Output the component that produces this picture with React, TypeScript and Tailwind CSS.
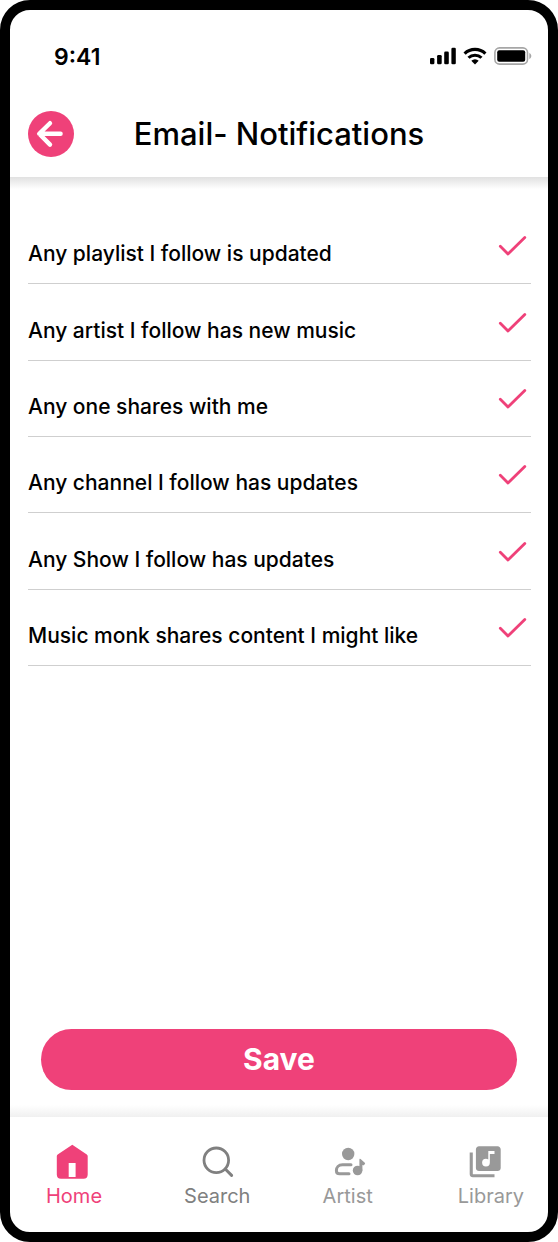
import { useState } from "react";

const options = [
  "Any playlist I follow is updated",
  "Any artist I follow has new music",
  "Any one shares with me",
  "Any channel I follow has updates",
  "Any Show I follow has updates",
  "Music monk shares content I might like",
];

function StatusBar() {
  return (
    <div className="flex items-start justify-between pl-11 pr-4 pt-8">
      <span className="text-[23px] leading-[30px] font-semibold">9:41</span>
      <div className="mt-[5px] flex items-center gap-[7px]">
        <svg width="26" height="18" viewBox="0 0 26 18" aria-hidden="true">
          <rect x="0" y="11" width="4.4" height="6.2" rx="1.3" />
          <rect x="7.1" y="8" width="4.6" height="9.2" rx="1.3" />
          <rect x="14.2" y="4.6" width="4.6" height="12.6" rx="1.3" />
          <rect x="21.4" y="0.8" width="4.4" height="16.4" rx="1.3" />
        </svg>
        <svg width="24" height="18" viewBox="0 0 24 18" aria-hidden="true">
          <path d="M1.6 6.6a15 15 0 0 1 20.8 0" fill="none" stroke="#000" strokeWidth="3.2" />
          <path d="M5.5 10.8a9.3 9.3 0 0 1 13 0" fill="none" stroke="#000" strokeWidth="3" />
          <path d="M8.3 13.7a5.3 5.3 0 0 1 7.4 0L12 17.4z" />
        </svg>
        <svg width="38" height="18" viewBox="0 0 38 18" aria-hidden="true">
          <rect x="0.9" y="0.9" width="32.6" height="16.2" rx="4.6" fill="none" stroke="#a6a6a6" strokeWidth="1.6" />
          <rect x="3.2" y="3.2" width="28" height="11.6" rx="2" />
          <path d="M35.3 6v6c1.2-.5 2-1.6 2-3s-.8-2.5-2-3z" fill="#a6a6a6" />
        </svg>
      </div>
    </div>
  );
}

function NavItem(props: any) {
  return (
    <a href="#" className={`flex flex-col items-center ${props.color}`}>
      <svg width="48" height="36" viewBox="-4 0 48 36" fill="currentColor" aria-hidden="true">
        {props.children}
      </svg>
      <span className="text-[20px] leading-8">{props.label}</span>
    </a>
  );
}

export default function App() {
  const [checked, setChecked] = useState(options.map(() => true));

  const toggle = (index: number) => {
    setChecked(checked.map((value, i) => (i === index ? !value : value)));
  };

  return (
    <div className="flex min-h-screen flex-col overflow-hidden rounded-[30px] border-[10px] border-black bg-white font-['Inter',sans-serif] text-black">
      <header className="pb-5">
        <StatusBar />
        <div className="mt-[39px] grid grid-cols-[46px_1fr_46px] items-center px-[18px]">
          <button type="button" aria-label="Back" className="size-[46px] cursor-pointer rounded-full bg-[#ef4179]">
            <svg width="46" height="46" viewBox="0 0 46 46" fill="none" stroke="#fff" strokeWidth="4.4" strokeLinecap="round" strokeLinejoin="round">
              <path d="M22 12.2L11.2 22.8L22 33.6M11.5 22.8H32.6" />
            </svg>
          </button>
          <h1 className="text-center text-[31px] leading-10 font-medium">Email- Notifications</h1>
        </div>
      </header>
      <div className="h-3 bg-linear-to-b from-[#e1e1e1] to-white" />

      <main className="flex flex-1 flex-col">
        <ul className="mt-[19px] ml-[18px] mr-[17px] grid min-h-[458px] auto-rows-fr">
          {options.map((option, i) => (
            <li key={option} className="border-b border-[#cfcfcf]">
              <label className="flex h-full cursor-pointer items-end justify-between pb-[17px] text-[21px] leading-6 font-medium">
                {option}
                <input
                  type="checkbox"
                  checked={checked[i]}
                  onChange={() => toggle(i)}
                  className="peer sr-only"
                />
                <svg
                  width="30"
                  height="24"
                  viewBox="0 0 30 24"
                  fill="none"
                  stroke="#ef4179"
                  strokeWidth="2.8"
                  strokeLinecap="round"
                  strokeLinejoin="round"
                  className="invisible mr-1 mb-[9px] peer-checked:visible"
                >
                  <path d="M3.3 13.2L11 21L27.8 4.4" />
                </svg>
              </label>
            </li>
          ))}
        </ul>
        <button
          type="button"
          className="mt-auto mb-[15px] ml-[31px] mr-[31px] h-[61px] cursor-pointer rounded-full bg-[#ef4179] text-[30px] font-bold text-white"
        >
          Save
        </button>
      </main>

      <div className="h-3 bg-linear-to-t from-[#f0f0f0] to-white" />
      <nav className="flex justify-between pt-[27px] pr-6 pb-5 pl-9">
        <div className="flex gap-[82px]">
          <NavItem label="Home" color="text-[#ef4179]">
            <path fillRule="evenodd" d="M18.3.8L32.8 10.6q.9.6.9 1.6V30.6q0 4.2-4.2 4.2H7q-4.2 0-4.2-4.2V12.2q0-1 .9-1.6zM14.7 19v14h6.9V19z" />
          </NavItem>
          <NavItem label="Search" color="text-[#808080]">
            <circle cx="19.3" cy="16.3" r="12.3" fill="none" stroke="currentColor" strokeWidth="2.8" />
            <path d="M28.5 25.2L34.6 31.4" stroke="currentColor" strokeWidth="3" strokeLinecap="round" />
          </NavItem>
        </div>
        <div className="flex gap-[85px]">
          <NavItem label="Artist" color="text-[#999999]">
            <circle cx="20.2" cy="10" r="6.2" />
            <path d="M23 20.7H14.5C10.5 20.7 8.4 23.4 8.4 26.4C8.4 28.8 9.4 29.8 11.6 29.8H21" fill="none" stroke="currentColor" strokeWidth="3" strokeLinecap="round" />
            <circle cx="29.6" cy="26.5" r="4.8" />
            <path d="M31.4 26.5V15.8q0-1.6 1.2-.7l4.2 3.6q.6.5.2 1.1l-.9 1.3q-.5.6-1.7-.2V26.5z" />
          </NavItem>
          <NavItem label="Library" color="text-[#999999]">
            <path
              transform="translate(-4.4 -0.8) scale(1.55)"
              d="M20 2H8c-1.1 0-2 .9-2 2v12c0 1.1.9 2 2 2h12c1.1 0 2-.9 2-2V4c0-1.1-.9-2-2-2zm-2 5h-3v5.5a2.5 2.5 0 0 1-5 0 2.5 2.5 0 0 1 2.5-2.5c.57 0 1.08.19 1.5.51V5h4v2zM4 6H2v14c0 1.1.9 2 2 2h14v-2H4V6z"
            />
          </NavItem>
        </div>
      </nav>
    </div>
  );
}
